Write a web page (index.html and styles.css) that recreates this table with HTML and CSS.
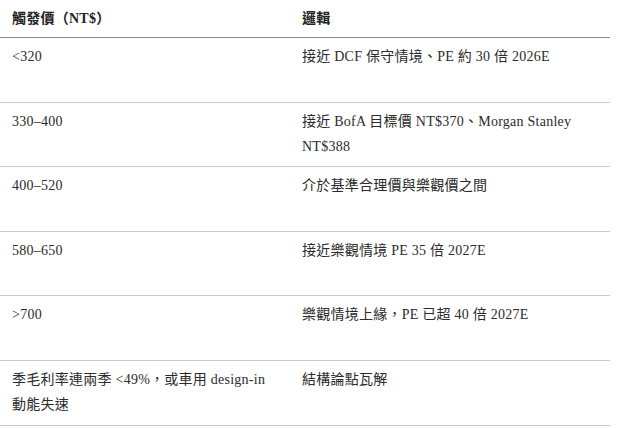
FILE: index.html
```html
<!DOCTYPE html>
<html lang="zh-Hant">
<head>
<meta charset="utf-8">
<title>觸發價</title>
<link rel="stylesheet" href="styles.css">
</head>
<body>
<table class="trig">
  <thead>
    <tr>
      <th class="c1">觸發價（NT$）</th>
      <th class="c2">邏輯</th>
    </tr>
  </thead>
  <tbody>
    <tr><td>&lt;320</td><td>接近 DCF 保守情境、PE 約 30 倍 2026E</td></tr>
    <tr><td>330–400</td><td>接近 BofA 目標價 NT$370、Morgan Stanley NT$388</td></tr>
    <tr><td>400–520</td><td>介於基準合理價與樂觀價之間</td></tr>
    <tr><td>580–650</td><td>接近樂觀情境 PE 35 倍 2027E</td></tr>
    <tr><td>&gt;700</td><td>樂觀情境上緣，PE 已超 40 倍 2027E</td></tr>
    <tr><td>季毛利率連兩季 &lt;49%，或車用 design-in 動能失速</td><td>結構論點瓦解</td></tr>
  </tbody>
</table>
</body>
</html>
```

FILE: styles.css
```css
html, body {
  margin: 0;
  padding: 0;
  background: #ffffff;
}
body {
  font-family: "Liberation Serif", "Noto Sans CJK TC", serif;
  font-size: 14px;
  letter-spacing: 0.25px;
  color: #2b2b2b;
}
.trig {
  width: 610px;
  border-collapse: collapse;
  table-layout: fixed;
}
.trig .c1 { width: 266px; }
.trig .c2 { width: 296px; }
.trig th {
  text-align: left;
  font-weight: bold;
  line-height: 25px;
  padding: 6px 12px 6px 12px;
  border-bottom: 1px solid #8a8a8a;
  color: #222;
}
.trig td {
  vertical-align: top;
  line-height: 25px;
  height: 50px;
  padding: 6px 12px 7.6px 12px;
  border-bottom: 1px solid #c8c8c8;
}
```
